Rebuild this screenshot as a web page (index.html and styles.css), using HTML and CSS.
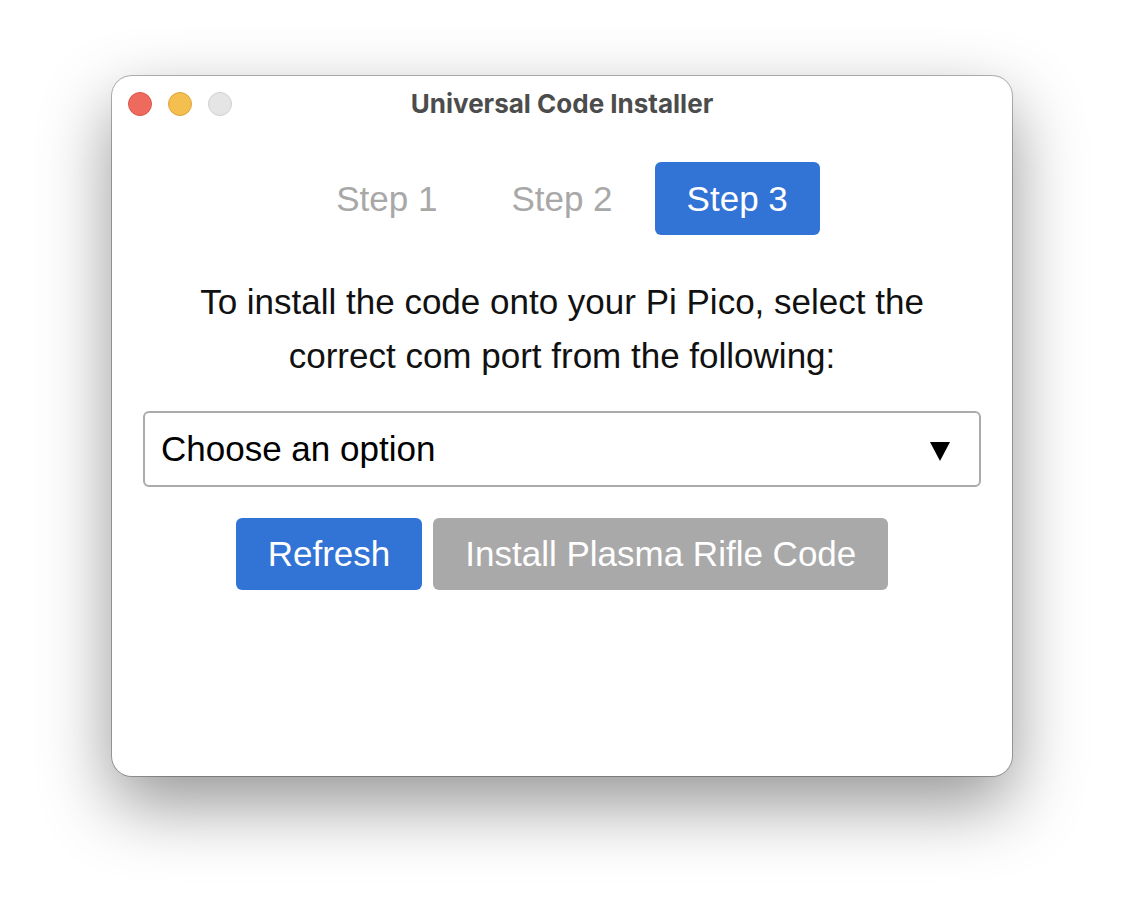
FILE: index.html
```html
<!DOCTYPE html>
<html>
<head>
<meta charset="utf-8">
<link rel="stylesheet" href="styles.css">
</head>
<body>
<div class="stage">
  <div class="window">
    <div class="titlebar">
      <div class="lights">
        <span class="light red"></span>
        <span class="light yellow"></span>
        <span class="light gray"></span>
      </div>
      <div class="title">Universal Code Installer</div>
    </div>
    <div class="content">
      <div class="tabs">
        <div class="tab">Step 1</div>
        <div class="tab">Step 2</div>
        <div class="tab active">Step 3</div>
      </div>
      <p class="intro">To install the code onto your Pi Pico, select the<br>correct com port from the following:</p>
      <div class="select">
        <span class="select-text">Choose an option</span>
        <svg class="arrow" width="20" height="19" viewBox="0 0 20 19"><polygon points="0,0 20,0 10,19" fill="#000"/></svg>
      </div>
      <div class="actions">
        <div class="btn primary">Refresh</div>
        <div class="btn disabled">Install Plasma Rifle Code</div>
      </div>
    </div>
  </div>
</div>
</body>
</html>
```

FILE: styles.css
```css
html, body {
  margin: 0;
  padding: 0;
  background: #ffffff;
}
.stage {
  padding: 76px 0 0 112px;
  min-height: 924px;
  box-sizing: border-box;
}
.window {
  width: 900px;
  height: 700px;
  box-sizing: border-box;
  background: #ffffff;
  border-radius: 20px;
  box-shadow: 0 0 0 1px rgba(0,0,0,0.28), 0 28px 70px rgba(0,0,0,0.42);
  font-family: "Liberation Sans", Arial, sans-serif;
  overflow: hidden;
}
.titlebar {
  position: relative;
  height: 56px;
  display: flex;
  align-items: center;
  justify-content: center;
}
.lights {
  position: absolute;
  left: 16px;
  top: 16px;
  display: flex;
  gap: 16px;
}
.light {
  width: 24px;
  height: 24px;
  border-radius: 50%;
  box-sizing: border-box;
}
.red { background: #ee6a5e; border: 1px solid #d9554b; }
.yellow { background: #f5bf4f; border: 1px solid #dba53c; }
.gray { background: #e5e5e5; border: 1px solid #cfcfcf; }
.title {
  font-family: Inter, "Liberation Sans", sans-serif;
  font-weight: 700;
  font-size: 26px;
  color: #4c4c4c;
  margin-top: -2px;
}
.content {
  padding: 30px 31px 0 31px;
  display: flex;
  flex-direction: column;
  align-items: center;
}
.tabs {
  display: flex;
  gap: 10px;
}
.tab {
  height: 73px;
  padding: 0 32px;
  display: flex;
  align-items: center;
  justify-content: center;
  font-size: 35px;
  color: #a8a8a8;
  border-radius: 6px;
}
.tab.active {
  background: #3273d6;
  color: #ffffff;
}
.intro {
  margin: 40px 0 0 0;
  text-align: center;
  font-size: 35px;
  line-height: 54px;
  color: #111111;
}
.select {
  margin-top: 28px;
  align-self: stretch;
  height: 76px;
  box-sizing: border-box;
  border: 2px solid #ababab;
  border-radius: 6px;
  display: flex;
  align-items: center;
  justify-content: space-between;
  padding: 0 29px 0 16px;
}
.select-text {
  font-size: 35px;
  color: #000000;
}
.arrow {
  display: block;
  margin-top: 5px;
}
.actions {
  margin-top: 31px;
  display: flex;
  gap: 11px;
}
.btn {
  height: 72px;
  display: flex;
  align-items: center;
  justify-content: center;
  padding: 0 32px;
  font-size: 35px;
  color: #ffffff;
  border-radius: 6px;
}
.btn.primary { background: #3273d6; }
.btn.disabled { background: #a9a9a9; }
```
